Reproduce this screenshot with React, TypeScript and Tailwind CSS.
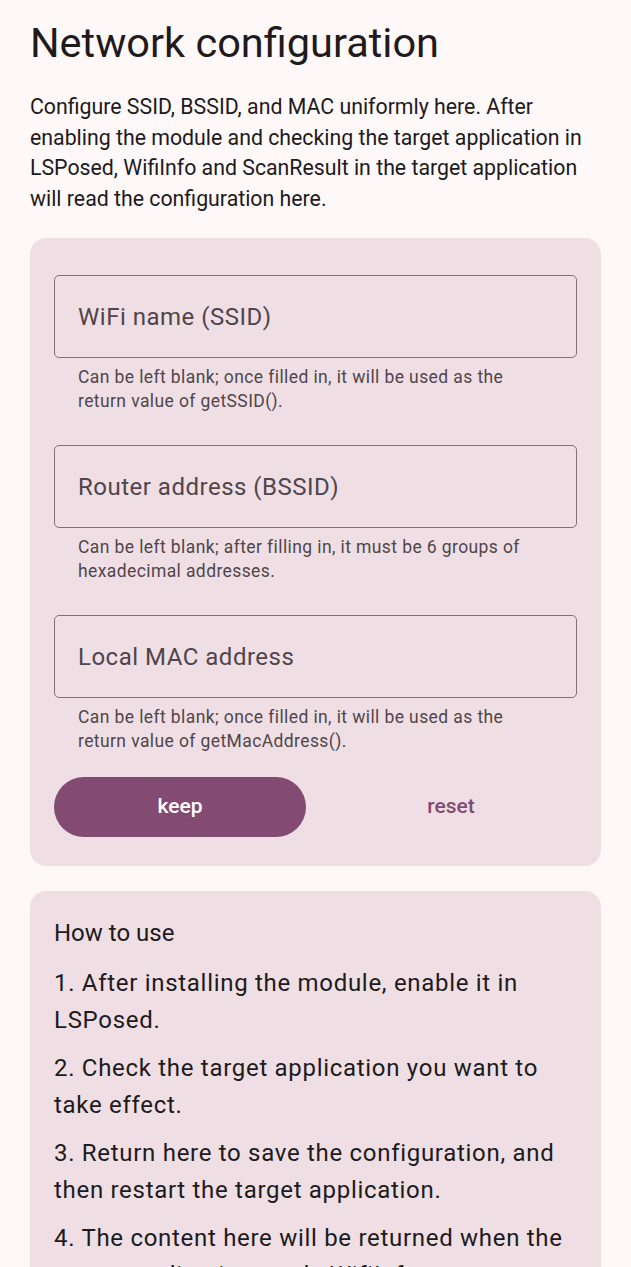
import React from "react";

const font = { fontFamily: "Roboto, 'Noto Sans', sans-serif" };

function Field({ label, help }: { label: string; help: string }) {
  return (
    <div className="flex flex-col">
      <div className="h-[83px] rounded-[5px] border-[1.5px] border-[#7f7378] flex items-center px-[23px]">
        <span className="text-[24px] tracking-[0.5px] text-[#51444a]">{label}</span>
      </div>
      <p className="px-[24px] pt-[7px] text-[17.5px] leading-[24px] tracking-[0.4px] text-[#51454a]">{help}</p>
    </div>
  );
}

const steps = [
  "1. After installing the module, enable it in LSPosed.",
  "2. Check the target application you want to take effect.",
  "3. Return here to save the configuration, and then restart the target application.",
  "4. The content here will be returned when the target application reads WifiInfo or ScanResult.",
];

export default function App() {
  return (
    <div className="h-[1267px] overflow-hidden bg-[#fff8f9] text-[#201a1c]" style={font}>
      <div className="px-[30px] pt-[14px]">
        <h1 className="text-[41.5px] leading-[58px] text-[#1f1a1c]">Network configuration</h1>
        <p className="mt-[20px] text-[21.3px] leading-[30.5px] text-[#201a1c]">
          Configure SSID, BSSID, and MAC uniformly here. After enabling the module and checking the target
          application in LSPosed, WifiInfo and ScanResult in the target application will read the configuration
          here.
        </p>

        <div className="mt-[24px] rounded-[16px] bg-[#efdfe4] px-[24px] pt-[37px] pb-[29px]">
          <div className="flex flex-col gap-[32px]">
            <Field
              label="WiFi name (SSID)"
              help="Can be left blank; once filled in, it will be used as the return value of getSSID()."
            />
            <Field
              label="Router address (BSSID)"
              help="Can be left blank; after filling in, it must be 6 groups of hexadecimal addresses."
            />
            <Field
              label="Local MAC address"
              help="Can be left blank; once filled in, it will be used as the return value of getMacAddress()."
            />
          </div>
          <div className="mt-[24px] grid grid-cols-2 gap-[19px]">
            <button className="h-[60px] rounded-full bg-[#844b72] text-white text-[21px] font-medium">keep</button>
            <button className="h-[60px] rounded-full text-[#844b72] text-[21px] font-medium">reset</button>
          </div>
        </div>

        <div className="mt-[25px] rounded-[16px] bg-[#efdfe4] px-[24px] pt-[27px] pb-[24px]">
          <h2 className="text-[24px] leading-[30px] text-[#201a1c]">How to use</h2>
          <div className="mt-[17px] flex flex-col gap-[11px]">
            {steps.map((s) => (
              <p key={s} className="text-[24px] leading-[37px] tracking-[0.7px] text-[#201a1c]">
                {s}
              </p>
            ))}
          </div>
        </div>
      </div>
    </div>
  );
}
